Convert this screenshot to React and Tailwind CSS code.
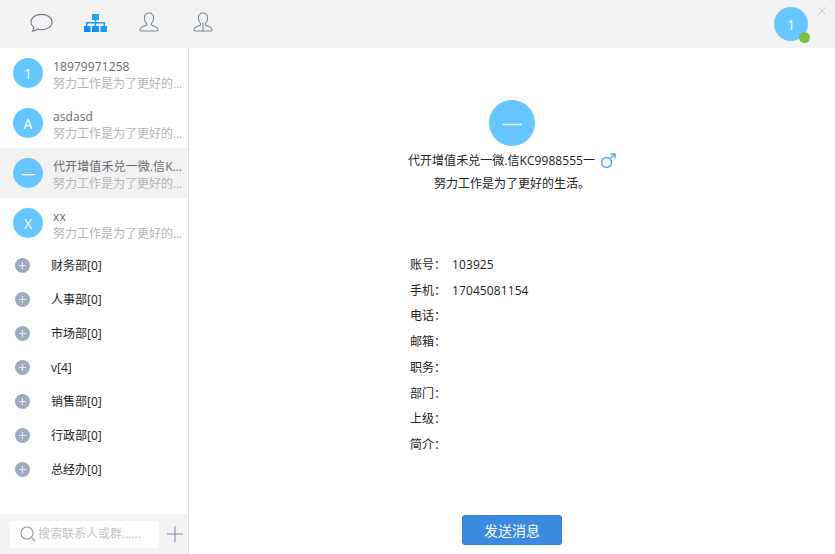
import React from "react";

function Avatar({ ch }) {
  return (
    <div className="w-[30px] h-[30px] shrink-0 rounded-full bg-[#66c6ff] text-white text-[14px] flex items-center justify-center">{ch}</div>
  );
}

function Contact({ ch, name, active }) {
  return (
    <div className={"h-[50px] flex items-center pl-[13px] " + (active ? "bg-[#f2f2f2]" : "")}>
      <Avatar ch={ch} />
      <div className="ml-[10px] w-[131px] text-[12px] leading-[16px] pt-[4px]">
        <div className="truncate text-[#666a70] tracking-[0.1px]">{name}</div>
        <div className="truncate text-[#b4b4b4] leading-[17px]">努力工作是为了更好的生活。</div>
      </div>
    </div>
  );
}

function Group({ name }) {
  return (
    <div className="h-[34px] flex items-center pl-[15px]">
      <div className="w-[15px] h-[15px] rounded-full bg-[#9cabbf] flex items-center justify-center">
        <svg width="9" height="9" viewBox="0 0 9 9"><path d="M4.5 1v7M1 4.5h7" stroke="#e8edf2" strokeWidth="1.2" /></svg>
      </div>
      <div className="ml-[21px] pt-[2px] text-[12px] text-[#222]">{name}</div>
    </div>
  );
}

function Info({ label, value }) {
  return (
    <div className="h-[25.75px] flex items-center text-[12px] text-[#222]">
      <span className="w-[42px]">{label}：</span>
      <span className="tracking-[0.1px]">{value}</span>
    </div>
  );
}

const personPath = "M10 1c-2.800 0-4.600 2.200-4.600 5.200 0 2.200.9 4 2 5.200.4.500.3 1.400-.3 1.800-1.500 1-5.800 2-6.100 4.300-.1.800.3 1.500 1.200 1.500h15.600c.9 0 1.300-.7 1.200-1.500-.3-2.300-4.600-3.300-6.100-4.300-.6-.4-.7-1.300-.3-1.800 1.100-1.200 2-3 2-5.200C14.600 3.200 12.800 1 10 1z";

export default function App() {
  return (
    <div className="w-[835px] h-[554px] bg-white flex flex-col overflow-hidden font-['Open_Sans','Noto_Sans_CJK_SC',sans-serif]">
      <div className="relative h-[48px] shrink-0 bg-[#f3f3f3] flex items-center pl-[30px]">
        <svg className="mb-[3px]" width="23" height="20" viewBox="0 0 24 20" fill="none" stroke="#727c90" strokeWidth="1.2">
          <path d="M12 1C6 1 1 4.200 1 9c0 2.500 1.200 4.400 3 5.800-.1 1.500-.6 2.700-1.300 3.700 2-.2 3.800-.9 5.200-2.100 1.300.4 2.700.6 4.100.6 6 0 11-3.200 11-8S18 1 12 1z" />
        </svg>
        <svg className="ml-[31px] mb-[2px]" width="23" height="18" viewBox="0 0 23 18">
          <defs>
            <linearGradient id="g" x1="0" y1="1" x2="1" y2="0">
              <stop offset="0" stopColor="#0a84f0" />
              <stop offset="1" stopColor="#2ab4fb" />
            </linearGradient>
          </defs>
          <path fill="url(#g)" d="M8 0h7v6H8zM2 8h19v1.500H2zM2 9.500h1.500V12H2zM10.800 6h1.400v6h-1.400zM19.500 9.500H21V12h-1.500zM0 12h6.500v6H0zM8 12h7v6H8zM16.500 12H23v6h-6.500z" />
        </svg>
        <svg className="ml-[32px] mb-[4px]" width="20" height="21" viewBox="0 0 20 21" fill="none" stroke="#7a85a0" strokeWidth="1.1">
          <path d={personPath} />
        </svg>
        <svg className="ml-[34px] mb-[4px]" width="20" height="21" viewBox="0 0 20 21" fill="none" stroke="#7a85a0" strokeWidth="1.1">
          <path d={personPath} />
          <path d="M10 10.500v9" />
        </svg>
        <div className="relative ml-auto mr-[27px] w-[34px] h-[34px] rounded-full bg-[#66c6ff] text-white text-[15px] flex items-center justify-center">
          1
          <div className="absolute right-[-2px] bottom-[-2px] w-[11px] h-[11px] rounded-full bg-[#7bc043]" />
        </div>
        <svg className="absolute right-[8px] top-[6px]" width="10" height="10" viewBox="0 0 10 10" stroke="#cfcfcf" strokeWidth="1">
          <path d="M1 1l8 8M9 1l-8 8" />
        </svg>
      </div>
      <div className="flex flex-1 min-h-0">
        <div className="w-[189px] shrink-0 border-r border-[#dcdcdc] flex flex-col">
          <Contact ch="1" name="18979971258" />
          <Contact ch="A" name="asdasd" />
          <Contact ch="—" name="代开增值禾兑一微.信KC9988555一" active />
          <Contact ch="X" name="xx" />
          <Group name="财务部[0]" />
          <Group name="人事部[0]" />
          <Group name="市场部[0]" />
          <Group name="v[4]" />
          <Group name="销售部[0]" />
          <Group name="行政部[0]" />
          <Group name="总经办[0]" />
          <div className="mt-auto h-[40px] bg-[#f3f3f3] flex items-center pl-[9px]">
            <div className="w-[151px] h-[29px] bg-white rounded-[4px] border border-[#f3f3f3] flex items-center pl-[10px]">
              <svg width="16" height="16" viewBox="0 0 16 16" fill="none" stroke="#9a9a9a" strokeWidth="1.1">
                <circle cx="7" cy="7" r="6" />
                <path d="M11.500 11.500L15 15" />
              </svg>
              <span className="ml-[2px] text-[12px] text-[#c4c4c4]">搜索联系人或群......</span>
            </div>
            <svg className="ml-[7px]" width="16" height="16" viewBox="0 0 16 16" stroke="#7a85a0" strokeWidth="1">
              <path d="M8 0v16M0 8h16" />
            </svg>
          </div>
        </div>
        <div className="flex-1 flex flex-col items-center">
          <div className="mt-[52px] w-[46px] h-[46px] rounded-full bg-[#66c6ff] text-white text-[20px] flex items-center justify-center">—</div>
          <div className="mt-[5px] h-[20px] flex items-center text-[12px] text-[#222]">
            <span className="tracking-[0.05px]">代开增值禾兑一微.信KC9988555一</span>
            <svg className="ml-[5px]" width="16" height="16" viewBox="0 0 16 16" fill="none" stroke="#4aa8f0" strokeWidth="1.4">
              <circle cx="6.500" cy="9.500" r="5" />
              <path d="M10 6l5-5M10.500 1H15v4.500" />
            </svg>
          </div>
          <div className="mt-[3px] text-[12px] leading-[20px] text-[#222]">努力工作是为了更好的生活。</div>
          <div className="mt-[58px] w-[204px]">
            <Info label="账号" value="103925" />
            <Info label="手机" value="17045081154" />
            <Info label="电话" />
            <Info label="邮箱" />
            <Info label="职务" />
            <Info label="部门" />
            <Info label="上级" />
            <Info label="简介" />
          </div>
          <button className="mt-[57px] w-[100px] h-[30px] rounded-[3px] bg-[#3a8ae2] border border-[#3580d4] text-white text-[14px]">发送消息</button>
        </div>
      </div>
    </div>
  );
}
